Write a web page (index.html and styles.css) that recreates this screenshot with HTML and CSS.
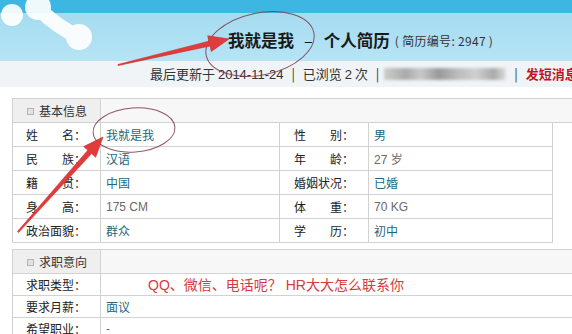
FILE: index.html
```html
<!DOCTYPE html>
<html lang="zh-CN">
<head>
    <meta charset="UTF-8">
    <title>我就是我 - 个人简历</title>
    <link rel="stylesheet" href="styles.css">
</head>
<body>
    <div class="page">
        <div class="banner">
            <svg class="logo" width="100" height="60" viewBox="0 0 100 60">
                <circle cx="12" cy="15" r="11" fill="#fff"/>
                <circle cx="38" cy="7" r="13" fill="#fff"/>
                <path d="M38 8 Q58 28 78 36" stroke="#fff" stroke-width="15" stroke-linecap="round" fill="none"/>
                <circle cx="79" cy="37" r="13" fill="#fff"/>
            </svg>
            <h1 class="title">我就是我<span class="dash">–</span>个人简历<small>( 简历编号: 2947 )</small></h1>
        </div>

        <div class="meta">
            最后更新于 <span class="num">2014-11-24</span>
            <span class="sep">|</span> 已浏览 <span class="num">2</span> 次
            <span class="sep">|</span><span class="blur"></span>
            <span class="sep">|</span> <a class="msg">发短消息</a>
        </div>

        <table class="info">
            <colgroup>
                <col class="c-label"><col class="c-value"><col class="c-label2"><col class="c-value2"><col class="c-photo">
            </colgroup>
            <tr class="head">
                <td class="sec"><span class="bullet"></span>基本信息</td>
                <td colspan="4"></td>
            </tr>
            <tr>
                <td class="label">姓　　名：</td><td class="value">我就是我</td>
                <td class="label r">性　　别：</td><td class="value">男</td>
                <td class="photo" rowspan="5"></td>
            </tr>
            <tr>
                <td class="label">民　　族：</td><td class="value">汉语</td>
                <td class="label r">年　　龄：</td><td class="value grey">27 岁</td>
            </tr>
            <tr>
                <td class="label">籍　　贯：</td><td class="value">中国</td>
                <td class="label r">婚姻状况：</td><td class="value">已婚</td>
            </tr>
            <tr>
                <td class="label">身　　高：</td><td class="value grey">175 CM</td>
                <td class="label r">体　　重：</td><td class="value grey">70 KG</td>
            </tr>
            <tr>
                <td class="label">政治面貌：</td><td class="value">群众</td>
                <td class="label r">学　　历：</td><td class="value">初中</td>
            </tr>
        </table>

        <table class="info job">
            <colgroup>
                <col class="c-label"><col class="c-rest">
            </colgroup>
            <tr class="head">
                <td class="sec"><span class="bullet"></span>求职意向</td>
                <td></td>
            </tr>
            <tr>
                <td class="label">求职类型：</td><td class="value"></td>
            </tr>
            <tr>
                <td class="label">要求月薪：</td><td class="value">面议</td>
            </tr>
            <tr>
                <td class="label">希望职业：</td><td class="value grey">-</td>
            </tr>
        </table>

        <!-- red marks drawn on top of the screenshot -->
        <svg class="marks" width="572" height="334" viewBox="0 0 572 334">
            <ellipse cx="260" cy="44" rx="55" ry="31" transform="rotate(-12 260 44)" class="ring"/>
            <ellipse cx="134" cy="130" rx="41" ry="22" transform="rotate(-4 134 130)" class="ring"/>
            <polygon class="arrow" points="117.9,64.5 208.9,41.2 207.7,35.8 229,39 211.3,51.4 210.1,46 118.1,65.5"/>
            <polygon class="arrow" points="17.5,231.5 87.8,150.2 83.7,146.6 103,137 95.7,157.2 91.6,153.6 18.5,232.5"/>
        </svg>
        <p class="note">QQ、微信、电话呢？ HR大大怎么联系你</p>
    </div>
</body>
</html>
```

FILE: styles.css
```css
body {
    margin: 0;
    background-color: #fff;
    font-family: "Liberation Sans", "Noto Sans CJK SC", sans-serif;
    color: #333;
}
.page {
    position: relative;
    width: 572px;
    height: 334px;
    overflow: hidden;
}

.banner {
    position: relative;
    height: 42px;
    padding-top: 19px;
    padding-left: 228px;
    display: flex;
    align-items: center;
    background: linear-gradient(#3db6e2 0, #3db6e2 13px, #a5dbf0 13px, #b6e4f5 61px);
}
.logo {
    position: absolute;
    left: 0;
    top: 0;
    opacity: 0.92;
}
.title {
    margin: 0;
    font-size: 16.5px;
    font-weight: bold;
    color: #1a1a1a;
    font-family: "Noto Sans CJK SC", sans-serif;
    white-space: nowrap;
    display: flex;
    align-items: center;
}
.title .dash {
    font-weight: normal;
    margin: 0 11px 0 10px;
}
.title small {
    font-size: 12px;
    font-weight: normal;
    color: #333;
    margin-left: 5px;
    letter-spacing: 0.3px;
}

.meta {
    height: 26px;
    line-height: 26px;
    padding-left: 150px;
    background-color: #f1f4f6;
    font-size: 13px;
    white-space: nowrap;
    font-family: "Noto Sans CJK SC", sans-serif;
}
.meta .num {
    font-family: "Liberation Sans", sans-serif;
}
.meta .sep {
    margin: 0 5px;
}
.blur {
    display: inline-block;
    width: 122px;
    height: 12px;
    vertical-align: -1px;
    background: linear-gradient(90deg, #ccc 0, #aaa 18%, #c8c8c8 30%, #999 45%, #bbb 60%, #d0d0d0 75%, #aaa 90%, #ddd 100%);
    filter: blur(1.5px);
}
.msg {
    color: #c3141c;
    font-weight: bold;
}

.info {
    border-collapse: collapse;
    margin-left: 12px;
    margin-top: 11px;
    width: 640px;
    table-layout: fixed;
    font-size: 12px;
    font-family: "Noto Sans CJK SC", sans-serif;
}
.info.job {
    margin-top: 6px;
    width: 700px;
}
.c-label { width: 88px; }
.c-value { width: 179px; }
.c-label2 { width: 89px; }
.c-value2 { width: 184px; }
.c-photo { width: 100px; }

.info td {
    border: 1px solid #d2d2d2;
    height: 23px;
    padding: 0 5px;
    white-space: nowrap;
}
.info.job td {
    height: 21px;
}
.info .head td {
    background-color: #f7f7f7;
}
.info .head td.sec {
    background-color: #efefef;
    padding-left: 14px;
}
.info.job .head td {
    height: 23px;
}
.bullet {
    display: inline-block;
    width: 5px;
    height: 5px;
    border: 1px solid #b5b5b5;
    background-color: #e2e2e2;
    margin-right: 5px;
    vertical-align: 1px;
}
.info .label {
    padding-left: 13px;
    color: #222;
}
.info .label.r {
    padding-left: 14px;
}
.info .value {
    color: #22677e;
}
.info .value.grey {
    color: #6a6a6a;
    font-family: "Liberation Sans", "Noto Sans CJK SC", sans-serif;
}
.info .photo {
    border-top: none;
    border-bottom: none;
    border-right: none;
}

.marks {
    position: absolute;
    left: 0;
    top: 0;
    pointer-events: none;
}
.ring {
    fill: none;
    stroke: #7d3a4c;
    stroke-width: 1;
    opacity: 0.85;
}
.arrow {
    fill: #e23b3b;
    stroke: #c62a2e;
    stroke-width: 0.6;
}
.note {
    position: absolute;
    left: 148px;
    top: 274px;
    margin: 0;
    font-size: 14px;
    color: #d63a3d;
    white-space: nowrap;
    font-family: "Liberation Sans", "Noto Sans CJK SC", sans-serif;
}
```
